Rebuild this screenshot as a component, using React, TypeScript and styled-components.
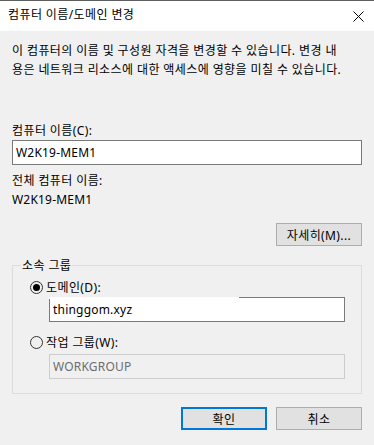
import React from "react";
import styled, { createGlobalStyle } from "styled-components";

const Global = createGlobalStyle`
  html, body { margin: 0; padding: 0; background: #f0f0f0; }
  body {
    font-family: "Segoe UI", "Noto Sans", "Noto Sans CJK KR", sans-serif;
    font-size: 12px;
    letter-spacing: 0.4px;
    color: #000;
  }
  * { box-sizing: border-box; }
`;

const Window = styled.div`
  width: 374px;
  height: 445px;
  background: #f0f0f0;
  display: flex;
  flex-direction: column;
  overflow: hidden;
`;

const TitleBar = styled.div`
  height: 31px;
  border-top: 1px solid #5f5f5f;
  background: #fff;
  display: flex;
  align-items: center;
  justify-content: space-between;
  padding: 0 10px 2px 8px;
`;

const Title = styled.span`
  font-size: 12px;
  line-height: 16px;
`;

const CloseBtn = styled.span`
  display: flex;
  width: 11px;
  height: 11px;
  margin-top: 2px;
`;

const Body = styled.div`
  display: flex;
  flex-direction: column;
  padding: 0 12px;
`;

const Desc = styled.p`
  margin: 10px 0 0;
  line-height: 19px;
  white-space: nowrap;
`;

const Label = styled.div<{ $mt?: number; $latin?: boolean }>`
  margin-top: ${(p) => p.$mt ?? 0}px;
  line-height: 19px;
  height: 19px;
  letter-spacing: ${(p) => (p.$latin ? "0.2px" : "0.4px")};
`;

const TextBox = styled.div`
  height: 25px;
  border: 1px solid #7a7a7a;
  background: #fff;
  padding: 0 3px;
  line-height: 23px;
  letter-spacing: 0.2px;
`;

const Button = styled.button<{ $primary?: boolean }>`
  width: 86px;
  height: 23px;
  padding: 0;
  font: inherit;
  font-size: 12px;
  letter-spacing: 0.4px;
  color: #000;
  background: #e1e1e1;
  border: ${(p) => (p.$primary ? "2px solid #0078d7" : "1px solid #adadad")};
`;

const DetailsButton = styled(Button)`
  align-self: flex-end;
  margin-top: 14px;
`;

const Group = styled.fieldset`
  margin: 10px 0 0;
  padding: 0 0 14px;
  border: 1px solid #dcdcdc;
  min-width: 0;
`;

const Legend = styled.legend`
  margin-left: 8px;
  padding: 0 1px;
  line-height: 19px;
`;

const RadioRow = styled.label<{ $mt: number }>`
  display: flex;
  align-items: center;
  gap: 3px;
  margin-top: ${(p) => p.$mt}px;
  padding-left: 17px;
  height: 17px;
  line-height: 17px;
`;

const RadioCircle = styled.span<{ $checked?: boolean }>`
  width: 13px;
  height: 13px;
  border: 1px solid #333;
  border-radius: 50%;
  display: flex;
  align-items: center;
  justify-content: center;
  &::after {
    content: "";
    width: 7px;
    height: 7px;
    border-radius: 50%;
    background: ${(p) => (p.$checked ? "#000" : "transparent")};
  }
`;

const GroupInput = styled.div<{ $disabled?: boolean; $mt: number }>`
  position: relative;
  margin: ${(p) => p.$mt}px 0 0 36px;
  width: 296px;
  height: 25px;
  padding: 0 3px;
  line-height: 23px;
  letter-spacing: 0.2px;
  border: 1px solid ${(p) => (p.$disabled ? "#cccccc" : "#7a7a7a")};
  background: ${(p) => (p.$disabled ? "#f0f0f0" : "#fff")};
  color: ${(p) => (p.$disabled ? "#6d6d6d" : "#000")};
`;

const TopGap = styled.span`
  position: absolute;
  top: -1px;
  left: -1px;
  width: 190px;
  height: 2px;
  background: #fff;
`;

const Footer = styled.div`
  display: flex;
  justify-content: flex-end;
  gap: 9px;
  margin-top: 13px;
`;

export default function App() {
  return (
    <Window>
      <Global />
      <TitleBar>
        <Title>컴퓨터 이름/도메인 변경</Title>
        <CloseBtn>
          <svg width="11" height="11" viewBox="0 0 11 11">
            <path d="M0.5 0.5 L10.5 10.5 M10.5 0.5 L0.5 10.5" stroke="#000" strokeWidth="1" fill="none" />
          </svg>
        </CloseBtn>
      </TitleBar>
      <Body>
        <Desc>
          이 컴퓨터의 이름 및 구성원 자격을 변경할 수 있습니다. 변경 내
          <br />
          용은 네트워크 리소스에 대한 액세스에 영향을 미칠 수 있습니다.
        </Desc>
        <Label $mt={42}>컴퓨터 이름(C):</Label>
        <TextBox>W2K19-MEM1</TextBox>
        <Label $mt={6}>전체 컴퓨터 이름:</Label>
        <Label $latin>W2K19-MEM1</Label>
        <DetailsButton>자세히(M)...</DetailsButton>
        <Group>
          <Legend>소속 그룹</Legend>
          <RadioRow $mt={4}>
            <RadioCircle $checked />
            도메인(D):
          </RadioRow>
          <GroupInput $mt={1}>
            <TopGap />
            thinggom.xyz
          </GroupInput>
          <RadioRow $mt={12}>
            <RadioCircle />
            작업 그룹(W):
          </RadioRow>
          <GroupInput $mt={3} $disabled>
            WORKGROUP
          </GroupInput>
        </Group>
        <Footer>
          <Button $primary>확인</Button>
          <Button>취소</Button>
        </Footer>
      </Body>
    </Window>
  );
}
